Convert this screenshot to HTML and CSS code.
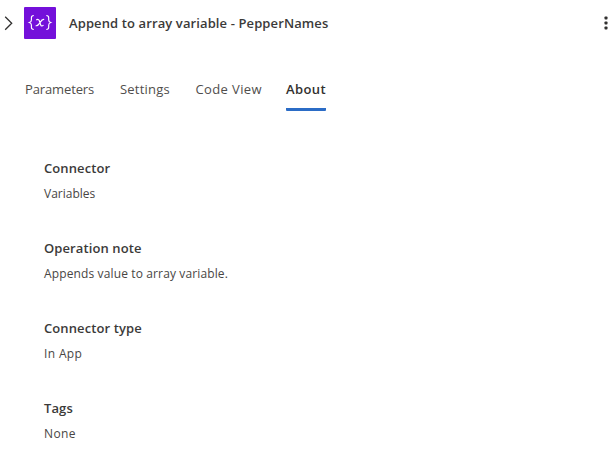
FILE: index.html
```html
<!DOCTYPE html>
<html lang="en">
<head>
<meta charset="utf-8">
<title>Append to array variable</title>
<link rel="stylesheet" href="styles.css">
</head>
<body>
<header class="header">
  <svg class="chevron" width="10" height="16" viewBox="0 0 10 16"><path d="M1.200 1.700 L7.700 8.200 L1.200 14.700"/></svg>
  <svg class="logo" width="32" height="32" viewBox="0 0 32 32"><rect width="32" height="32" rx="1" fill="#7410da"/><g fill="none" stroke="#fff" stroke-width="1.150"><path d="M9.800 8.500c-2 0-2.400.7-2.400 2.200v2.300c0 1.400-.5 2-2 2.500 1.500.5 2 1.100 2 2.500v2.300c0 1.500.4 2.200 2.400 2.200M22.300 8.500c2 0 2.400.7 2.400 2.200v2.300c0 1.400.5 2 2 2.500-1.500.5-2 1.100-2 2.500v2.300c0 1.500-.4 2.200-2.400 2.200"/><path d="M12.300 13c1.300-1 2.500-.7 3 .8l1.300 4c.5 1.500 1.700 1.600 2.900.2M20.200 12.500c-1.600-.5-2.500.4-4.200 3.100s-2.700 3.700-4.300 3"/></g></svg>
  <h1 class="title">Append to array variable - PepperNames</h1>
  <svg class="more" width="4" height="14" viewBox="0 0 4 14"><rect x=".5" y=".500" width="3" height="3" rx=".8"/><rect x=".5" y="5.500" width="3" height="3" rx=".8"/><rect x=".5" y="10.500" width="3" height="3" rx=".8"/></svg>
</header>
<nav class="tabs">
  <a class="tab parameters">Parameters</a>
  <a class="tab settings">Settings</a>
  <a class="tab code-view">Code View</a>
  <a class="tab active">About</a>
</nav>
<main class="details">
  <section><h2>Connector</h2><p class="connector-name">Variables</p></section>
  <section><h2>Operation note</h2><p>Appends value to array variable.</p></section>
  <section><h2>Connector type</h2><p class="short">In App</p></section>
  <section><h2>Tags</h2><p class="short">None</p></section>
</main>
</body>
</html>
```
FILE: styles.css
```css
* { box-sizing: border-box; }
body { margin: 0; background: #fff; color: #3b3a39; font-family: "Open Sans", "Noto Sans", sans-serif; font-size: 13px; }
h1, h2, p { margin: 0; white-space: nowrap; }
.header { display: flex; align-items: center; height: 46px; padding: 0 6px 0 4px; }
.chevron { fill: none; stroke: #323130; stroke-width: 1.3; }
.logo { margin-left: 10px; }
.title { margin-left: 13px; font-size: 13px; font-weight: 600; line-height: 20px; letter-spacing: 0.11px; }
.more { margin-left: auto; fill: #323130; }
.tabs { display: grid; grid-template-columns: 95px 75.5px 90.500px 40px; margin: 22px 0 0 25px; height: 43px; }
.tab { height: 43px; line-height: 43px; white-space: nowrap; color: #504e4c; }
.parameters { letter-spacing: -0.13px; }
.settings { letter-spacing: 0.2px; }
.code-view { letter-spacing: 0.38px; }
.tab.active { color: #323130; font-weight: 600; letter-spacing: 0.4px; border-bottom: 3px solid #2b6cc6; border-radius: 1px; }
.details { padding: 47px 44px 0; }
.details section { height: 80px; }
.details section:last-child { height: 52px; }
.details h2 { font-size: 13px; font-weight: 600; line-height: 20px; letter-spacing: 0.1px; }
.details p { color: #484644; font-size: 12px; line-height: 20px; margin-top: 6px; letter-spacing: 0.13px; }
.details .connector-name { letter-spacing: 0; }
.details .short { letter-spacing: 0.35px; }
```
